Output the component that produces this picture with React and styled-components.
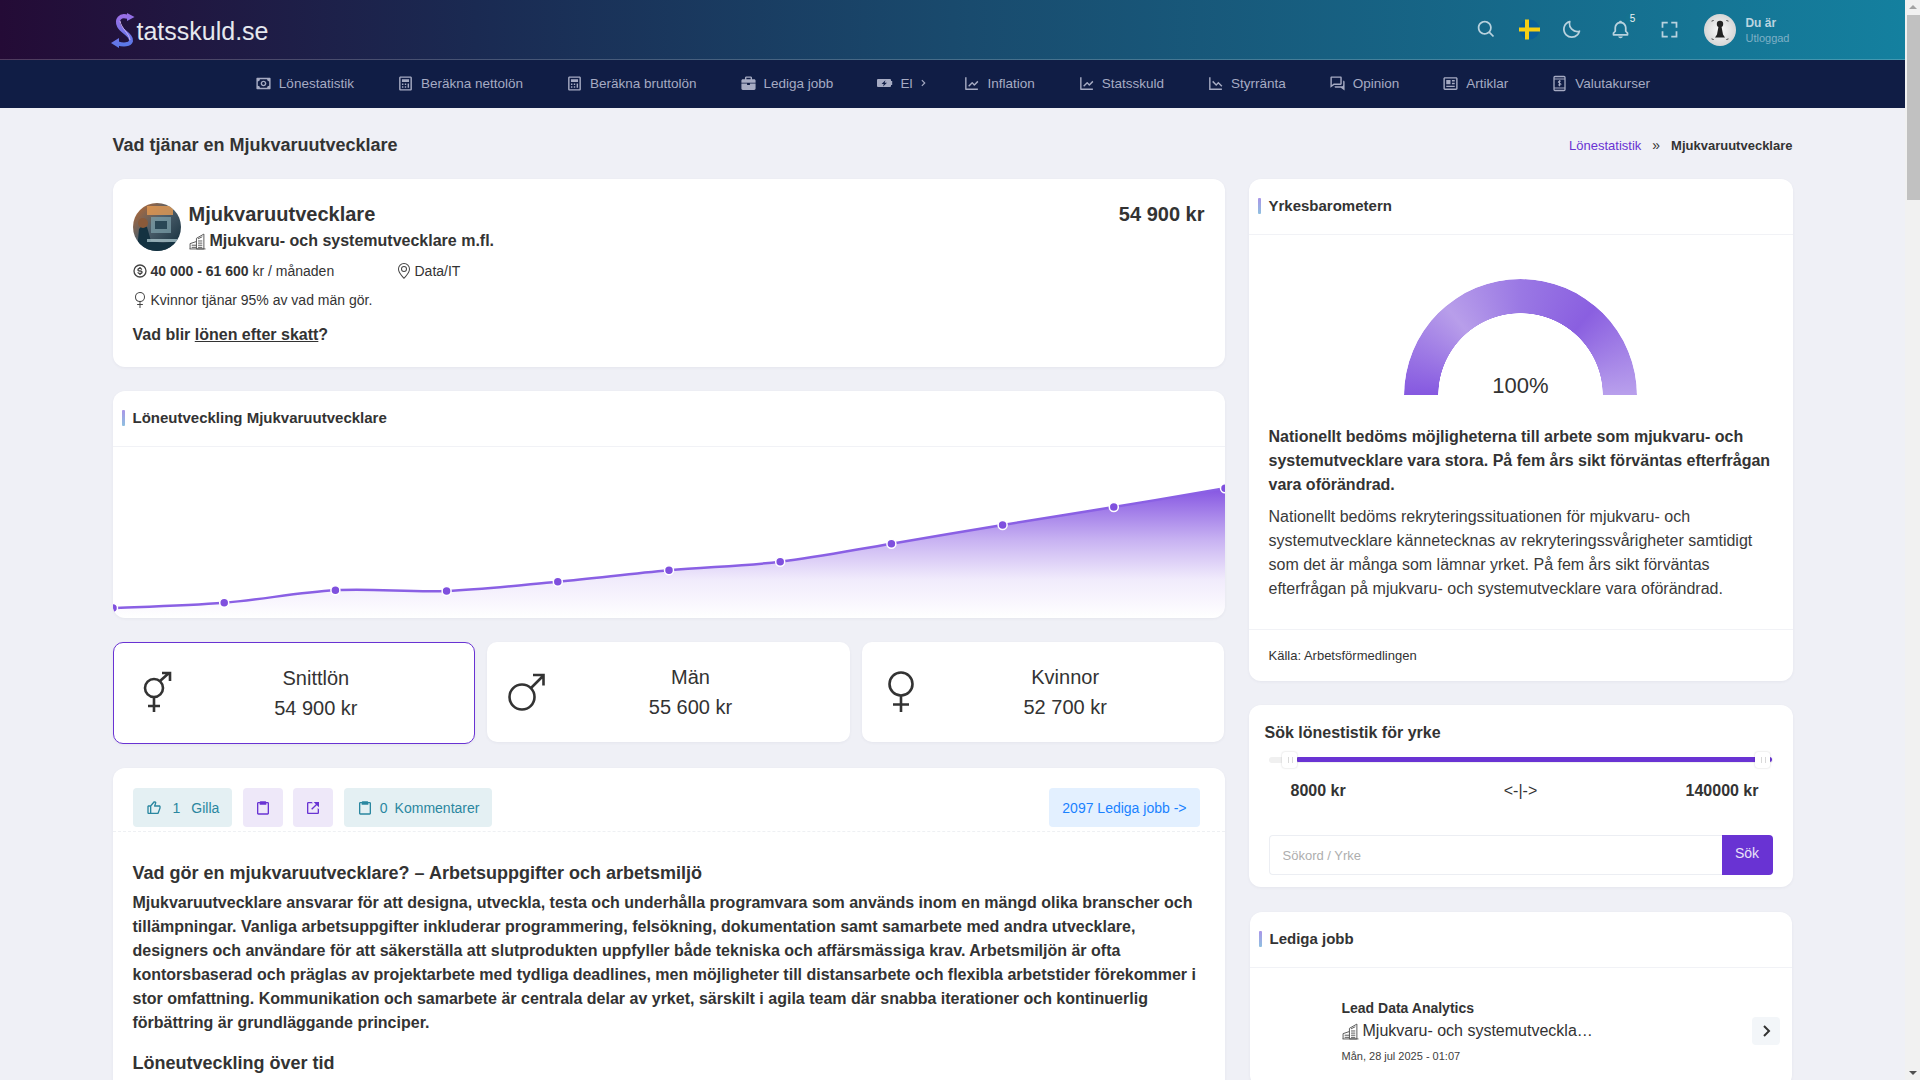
import React from "react";
import styled, { createGlobalStyle } from "styled-components";
import {
  BiSearch, BiMoon, BiBell, BiFullscreen, BiMoney, BiCalculator, BiSolidBriefcase, BiChevronRight,
  BiLineChart, BiLineChartDown, BiConversation, BiNews, BiLike, BiClipboard, BiLinkExternal, BiDollarCircle,
} from "react-icons/bi";
import { BsGenderFemale, BsGeoAlt } from "react-icons/bs";

const Global = createGlobalStyle`
  html, body { margin: 0; padding: 0; }
  body { background: #eff0f6; color: #333; font-family: "Liberation Sans", Arial, sans-serif; font-size: 14px; }
  * { box-sizing: border-box; }
  p, h1, h2, h3 { margin: 0; }
  a { color: inherit; }
`;

const Page = styled.div`padding-right: 15px;`;
const ScrollTrack = styled.div`position: fixed; top: 0; right: 0; bottom: 0; width: 15px; background: #f1f1f1;`;
const ScrollThumb = styled.div`position: absolute; top: 15px; left: 2px; right: 0; height: 185px; background: #c1c1c1;`;
const ScrollArrow = styled.div`
  position: absolute; left: 4px; width: 0; height: 0; border-left: 4px solid transparent; border-right: 4px solid transparent;
  ${p => (p.$down ? "bottom: 5px; border-top: 4px solid #505050;" : "top: 5px; border-bottom: 4px solid #a3a3a3;")}
`;
const TopBar = styled.header`
  height: 60px; display: flex; align-items: center; justify-content: center;
  background: linear-gradient(90deg, #240b36 0%, #1a2a52 25%, #194a6d 50%, #14809f 100%);
  border-bottom: 1px solid rgba(255, 255, 255, .2);
`;
const TopInner = styled.div`width: 1680px; display: flex; align-items: center; justify-content: space-between;`;
const Brand = styled.div`display: flex; align-items: center; color: #e6e8ee; font-size: 25px; line-height: 34px; margin-top: 2px;`;
const BrandMark = styled.svg`width: 26px; height: 36px; margin-left: -2px; margin-top: -2px; flex: none;`;
const TopTools = styled.div`display: flex; align-items: center; color: #b9d2de;`;
const ToolIcon = styled.div`
  width: ${p => p.$w || 49}px; display: flex; justify-content: center; position: relative; font-size: 21px; line-height: 0;
`;
const Badge = styled.span`
  position: absolute; top: -7px; left: 29px; width: 14px; height: 14px; border-radius: 50%;
  background: #15728f; color: #e8f2f6; font-size: 10px; line-height: 14px; text-align: center;
`;
const UserBox = styled.div`display: flex; align-items: center; gap: 9px; margin-left: 10px; margin-right: 3px;`;
const UserText = styled.div`display: flex; flex-direction: column; gap: 2px; margin-top: 2px; font-size: 11px; line-height: 13px;`;
const UserName = styled.span`font-size: 12px; line-height: 14px; font-weight: 700; color: #bcd5e0;`;
const UserState = styled.span`color: #7fb0c6;`;
const NavBar = styled.nav`
  height: 48px; padding-bottom: 2px; background: #101d45; display: flex; align-items: center; justify-content: center;
  color: #a6abc3; font-size: 13.5px;
`;
const NavItem = styled.div`display: flex; align-items: center; gap: 7px; padding: 0 21.5px; white-space: nowrap; svg { font-size: 17px; flex: none; }`;
const NavChevron = styled.span`margin-left: -3px; margin-right: -10px; line-height: 0; svg { font-size: 14px; }`;

const Container = styled.main`width: 1680px; margin: 0 auto;`;
const TitleRow = styled.div`display: flex; justify-content: space-between; align-items: center; padding: 27px 0 24px;`;
const PageTitle = styled.h1`font-size: 18px; line-height: 20px; font-weight: 700; color: #333;`;
const Crumbs = styled.div`display: flex; align-items: center; gap: 11px; font-size: 13px;`;
const CrumbLink = styled.span`color: #6933d3;`;
const CrumbSep = styled.span`color: #333; font-size: 14px;`;
const CrumbNow = styled.span`font-weight: 700;`;
const Columns = styled.div`display: grid; grid-template-columns: 1112px 544px; gap: 24px;`;
const Column = styled.div`display: flex; flex-direction: column; gap: 24px; min-width: 0;`;
const Card = styled.section`
  background: #fff; border-radius: 12px; box-shadow: 0 1px 3px rgba(60, 70, 110, .06); overflow: hidden;
`;

const ProfileCard = styled(Card)`padding: 23px 20px 23px; height: 188px;`;
const ProfileHead = styled.div`display: flex; align-items: center; justify-content: space-between;`;
const ProfileId = styled.div`display: flex; align-items: center; gap: 8px;`;
const ProfileNames = styled.div`display: flex; flex-direction: column;`;
const JobName = styled.h2`font-size: 20px; line-height: 24px; font-weight: 700;`;
const JobGroup = styled.div`display: flex; align-items: center; gap: 4px; font-size: 16px; line-height: 26px; font-weight: 700; margin-top: 2px; margin-bottom: -2px;`;
const Salary = styled.div`font-size: 20px; font-weight: 700; line-height: 24px; align-self: flex-start;`;
const MetaRow = styled.div`display: flex; align-items: center; font-size: 14px; line-height: 20px; margin-top: 9px;`;
const MetaCell = styled.div`display: flex; align-items: center; gap: 3px; margin-left: -1px; width: ${p => p.$w || "auto"}; svg { font-size: 16px; color: #444; flex: none; }`;
const Question = styled.p`font-size: 16px; line-height: 20px; font-weight: 700; margin-top: 15px;`;

const CardHead = styled.div`
  height: 56px; display: flex; align-items: center; gap: 8px; padding: 0 0 2px 9px; border-bottom: 1px solid #f1f2f6;
  font-size: 15px; font-weight: 700; color: #333;
  &::before { content: ""; width: 3px; height: 16px; border-radius: 1px; background: linear-gradient(180deg, #a996e8, #8fc0e0); }
`;
const ChartBox = styled.div`height: 171px; line-height: 0;`;
const ChartSvg = styled.svg`display: block; width: 100%; height: 100%;`;

const StatGrid = styled.div`display: grid; grid-template-columns: repeat(3, 1fr); gap: 12px; align-items: start;`;
const StatCard = styled.div`
  background: #fff; border-radius: 10px; display: grid; grid-template-columns: 80px 1fr; align-items: center;
  padding: 20px 36px 20px 0; box-shadow: 0 1px 3px rgba(60, 70, 110, .06);
  border: ${p => (p.$active ? "1px solid #6933d3" : "none")};
`;
const StatIcon = styled.svg`width: 44px; height: 44px; justify-self: center; fill: none; stroke: #333; stroke-width: 2.6; margin-left: ${p => p.$shift || 0}px;`;
const StatText = styled.div`text-align: center; font-size: 20px; line-height: 30px; color: #333;`;

const ActionBar = styled.div`display: flex; align-items: center; padding: 20px 25px 4px 20px; gap: 10.5px; border-bottom: 1px dashed #eef0f3; height: 64px;`;
const ActionBtn = styled.div`
  height: 39px; border-radius: 4px; display: flex; align-items: center; justify-content: center; font-size: 14px; white-space: nowrap;
  padding: 0 ${p => p.$px || 13}px; gap: ${p => p.$gap || 11}px;
  background: ${p => (p.$tone === "purple" ? "#eee8f9" : p.$tone === "blue" ? "#e3f0ff" : "#e4f0f3")};
  color: ${p => (p.$tone === "purple" ? "#6933d3" : p.$tone === "blue" ? "#1a82ff" : "#2a87a0")};
  svg { font-size: 16px; flex: none; }
`;
const Spacer = styled.div`flex: 1;`;
const Article = styled.div`padding: 30px 20px 30px;`;
const ArticleHead = styled.h3`font-size: 18px; line-height: 22px; font-weight: 700; color: #333;`;
const ArticleText = styled.p`font-size: 16px; line-height: 24px; font-weight: 700; color: #333; margin-top: 7px;`;
const ArticleHeadTwo = styled(ArticleHead)`margin-top: 17px;`;

const GaugeWrap = styled.div`display: flex; justify-content: center; padding-top: 44px; margin-bottom: 30px;`;
const Gauge = styled.div`
  width: 233px; height: 116px; position: relative;
  display: flex; align-items: flex-end; justify-content: center;
`;
const GaugeClip = styled.div`position: absolute; inset: 0; overflow: hidden;`;
const GaugeRing = styled.div`
  width: 233px; height: 233px; border-radius: 50%;
  background: conic-gradient(from 270deg, #8558e0 0deg, #b89eea 50deg, #9a78e4 90deg, #8a5fe0 130deg, #b9a0ec 180deg, #b9a0ec 360deg);
  -webkit-mask: radial-gradient(circle, transparent 82px, #000 82.5px);
  mask: radial-gradient(circle, transparent 82px, #000 82.5px);
`;
const GaugeValue = styled.span`position: relative; font-size: 22px; line-height: 28px; margin-bottom: -5px;`;
const BarometerBody = styled.div`padding: 0 20px;`;
const StrongPara = styled.p`font-size: 16px; line-height: 24px; font-weight: 700;`;
const PlainPara = styled.p`font-size: 16px; line-height: 24px; margin-top: 8px; color: #3a3a3a;`;
const SourceLine = styled.div`margin-top: 28px; height: 52px; border-top: 1px solid #f1f2f6; display: flex; align-items: center; padding: 0 20px; font-size: 13px;`;

const SearchCard = styled(Card)`padding: 18px 20px 12px;`;
const SearchTitle = styled.h3`font-size: 16px; line-height: 20px; font-weight: 700; margin-left: -4px;`;
const Slider = styled.div`position: relative; height: 6px; margin-top: 14px; background: #f0f0f0; border-radius: 3px;`;
const SliderFill = styled.div`position: absolute; left: 27px; right: 1px; top: 0; height: 5px; background: #6933d3; border-radius: 3px;`;
const SliderHandle = styled.div`
  position: absolute; top: -5px; width: 15px; height: 16px; background: #fff; border-radius: 3px;
  box-shadow: 0 0 2px rgba(0, 0, 0, .2); left: ${p => p.$left}px;
  &::after { content: ""; position: absolute; left: 6px; top: 5px; width: 3px; height: 6px; border-left: 1px solid #d9d9d9; border-right: 1px solid #d9d9d9; }
`;
const RangeRow = styled.div`display: grid; grid-template-columns: 1fr auto 1fr; padding: 0 14px; margin-top: 18px; font-size: 16px; line-height: 20px;`;
const RangeEnd = styled.span`font-weight: 700; text-align: ${p => p.$right ? "right" : "left"}; padding-left: ${p => p.$right ? 0 : 8}px;`;
const SearchForm = styled.div`display: flex; height: 40px; margin-top: 34px;`;
const SearchInput = styled.input`
  flex: 1; min-width: 0; border: 1px solid #eceef3; border-right: none; border-radius: 4px 0 0 4px; padding: 0 13px; outline: none;
  font: 13px "Liberation Sans", Arial, sans-serif; color: #333;
  &::placeholder { color: #aeaeae; opacity: 1; }
`;
const SearchBtn = styled.button`
  width: 51px; border: none; border-radius: 0 4px 4px 0; background: #6933d3; color: #e9e2f8; padding: 0 0 4px;
  font: 14px "Liberation Sans", Arial, sans-serif;
`;

const JobsCard = styled(Card)`margin: 1px 1px 0;`;
const JobItem = styled.div`display: flex; align-items: center; justify-content: space-between; padding: 32px 12px 24px 92px;`;
const JobText = styled.div`display: flex; flex-direction: column;`;
const JobTitle = styled.div`font-size: 14px; line-height: 16px; font-weight: 700;`;
const JobCompany = styled.div`display: flex; align-items: center; gap: 4px; font-size: 16px; line-height: 22px; margin-top: 4px;`;
const JobDate = styled.div`font-size: 11px; line-height: 13px; margin-top: 8px; color: #3e3e3e;`;
const JobArrow = styled.div`width: 28px; height: 28px; margin-top: -2px; border-radius: 4px; background: #f3f6f9; display: flex; align-items: center; justify-content: center; font-size: 24px; color: #333;`;

const Building = () => (
  <svg width="17" height="17" viewBox="0 0 16 16" fill="none" stroke="#555" strokeWidth=".9">
    <path d="M7 15V5l7-4v14zM1 15v-5l6-2M.5 15h15M8.5 5.500l4-2M8.500 7.500h4M8.500 9.500h4M8.500 11.500h4M8.500 13.500h4M2.500 11.500H7M2.500 13.500H7" />
  </svg>
);

const chartData = [161, 155.7, 143.3, 144, 134.7, 123.3, 114.7, 96.7, 78, 60, 41.3];
const stepX = 1112 / 10;
const pts = chartData.map((y, i) => [i * stepX, y]);
const linePath = pts.reduce((d, p, i) => {
  if (i === 0) return `M${p[0]} ${p[1]}`;
  const p0 = pts[Math.max(i - 2, 0)], p1 = pts[i - 1], p3 = pts[Math.min(i + 1, pts.length - 1)];
  const c1x = p1[0] + (p[0] - p0[0]) / 6, c1y = p1[1] + (p[1] - p0[1]) / 6;
  const c2x = p[0] - (p3[0] - p1[0]) / 6, c2y = p[1] - (p3[1] - p1[1]) / 6;
  return `${d} C${c1x} ${c1y} ${c2x} ${c2y} ${p[0]} ${p[1]}`;
}, "");

const navItems = [
  [<BiMoney />, "Lönestatistik"], [<BiCalculator />, "Beräkna nettolön"], [<BiCalculator />, "Beräkna bruttolön"],
  [<BiSolidBriefcase />, "Lediga jobb"],
  [<svg width="17" height="17" viewBox="0 0 17 17" fill="currentColor"><path d="M2 4h12a1 1 0 0 1 1 1v1h1.2v4H15v1a1 1 0 0 1-1 1H2a1 1 0 0 1-1-1V5a1 1 0 0 1 1-1zm7.4 1.2L5.6 9h2.2l-.8 2.6L11 7.8H8.7z" fillRule="evenodd" /></svg>, "El", true],
  [<BiLineChart />, "Inflation"], [<BiLineChart />, "Statsskuld"], [<BiLineChartDown />, "Styrränta"],
  [<BiConversation />, "Opinion"], [<BiNews />, "Artiklar"],
  [<svg width="17" height="17" viewBox="0 0 17 17" fill="none" stroke="currentColor" strokeWidth="1.3"><rect x="3" y="1.5" width="11" height="14" rx="1" /><path d="M3 4h11M3 13h11M10 6.4c-.5-.5-2.800-.7-2.800.7s2.900.7 2.900 2-2.500 1.300-3.100.5M8.500 5.300v6" strokeWidth="1" /></svg>, "Valutakurser"],
];

export default function App() {
  return (
    <Page>
      <Global />
      <ScrollTrack>
        <ScrollArrow />
        <ScrollThumb />
        <ScrollArrow $down />
      </ScrollTrack>
      <TopBar>
        <TopInner>
          <Brand>
            <BrandMark viewBox="0 0 26 36" fill="none">
              <defs>
                <linearGradient id="lg" x1="0" y1="0" x2="0" y2="1">
                  <stop offset="0" stopColor="#9a6fe6" />
                  <stop offset="1" stopColor="#5b78e8" />
                </linearGradient>
              </defs>
              <path d="M17 5 C9 2 5 8 8 14 C11 20 21 23 20 29 C19 33 12 33 7 31.500" stroke="url(#lg)" strokeWidth="4" />
              <path d="M9 9 C10 16 18 21 19 28" stroke="#cdb2f2" strokeWidth="1" />
              <path d="M16 1 L23.500 5 L16 9Z M8 26 L0 31 L8 36Z" fill="url(#lg)" />
            </BrandMark>
            tatsskuld.se
          </Brand>
          <TopTools>
            <ToolIcon $w={50}><BiSearch /></ToolIcon>
            <ToolIcon $w={36}>
              <svg width="21" height="21" viewBox="0 0 21 21">
                <circle cx="10.500" cy="10.500" r="10" fill="#0b5f98" />
                <path d="M0 8.500h21v4H0zM6 .5h4v20H6z" fill="#f7cf14" />
              </svg>
            </ToolIcon>
            <ToolIcon><BiMoon /></ToolIcon>
            <ToolIcon><BiBell /><Badge>5</Badge></ToolIcon>
            <ToolIcon><BiFullscreen /></ToolIcon>
            <UserBox>
              <svg width="32" height="32" viewBox="0 0 32 32">
                <defs>
                  <radialGradient id="av"><stop offset="0" stopColor="#fafafa" /><stop offset="1" stopColor="#d6d6d6" /></radialGradient>
                </defs>
                <circle cx="16" cy="16" r="16" fill="url(#av)" />
                <circle cx="16" cy="10" r="3.200" fill="#222" />
                <path d="M14.500 12.500h3l1.500 8 2 3H11l2-3z" fill="#222" />
                <path d="M8 8V6.500h2M24 8V6.500h-2M8 24v1.500h2M24 24v1.500h-2" stroke="#666" strokeWidth=".8" fill="none" />
              </svg>
              <UserText><UserName>Du är</UserName><UserState>Utloggad</UserState></UserText>
            </UserBox>
          </TopTools>
        </TopInner>
      </TopBar>
      <NavBar>
        {navItems.map(([icon, label, more]) => (
          <NavItem key={label}>
            {icon}{label}{more && <NavChevron><BiChevronRight /></NavChevron>}
          </NavItem>
        ))}
      </NavBar>

      <Container>
        <TitleRow>
          <PageTitle>Vad tjänar en Mjukvaruutvecklare</PageTitle>
          <Crumbs>
            <CrumbLink>Lönestatistik</CrumbLink>
            <CrumbSep>»</CrumbSep>
            <CrumbNow>Mjukvaruutvecklare</CrumbNow>
          </Crumbs>
        </TitleRow>
        <Columns>
          <Column>
            <ProfileCard>
              <ProfileHead>
                <ProfileId>
                  <svg width="48" height="48" viewBox="0 0 48 48">
                    <defs>
                      <clipPath id="pc"><circle cx="24" cy="24" r="24" /></clipPath>
                      <linearGradient id="pg" x1="0" y1="0" x2="1" y2="1">
                        <stop offset="0" stopColor="#c56a2c" />
                        <stop offset=".45" stopColor="#4d5f6c" />
                        <stop offset="1" stopColor="#0f2a38" />
                      </linearGradient>
                    </defs>
                    <g clipPath="url(#pc)">
                      <rect width="48" height="48" fill="url(#pg)" />
                      <rect x="18" y="14" width="20" height="16" fill="#7fa3ad" opacity=".7" />
                      <rect x="22" y="18" width="12" height="8" fill="#2a4756" />
                      <rect x="14" y="3" width="26" height="9" fill="#e39a52" opacity=".8" />
                      <path d="M4 48 L6 26 Q10 20 14 24 L18 38 L30 40 L48 38 V48Z" fill="#143241" />
                      <circle cx="10" cy="20" r="5" fill="#8a5a3a" />
                      <rect x="14" y="36" width="30" height="3" fill="#b9d4da" opacity=".7" />
                    </g>
                  </svg>
                  <ProfileNames>
                    <JobName>Mjukvaruutvecklare</JobName>
                    <JobGroup><Building />Mjukvaru- och systemutvecklare m.fl.</JobGroup>
                  </ProfileNames>
                </ProfileId>
                <Salary>54 900 kr</Salary>
              </ProfileHead>
              <MetaRow>
                <MetaCell $w="265px"><BiDollarCircle /><span><b>40 000 - 61 600</b> kr / månaden</span></MetaCell>
                <MetaCell><BsGeoAlt /><span>Data/IT</span></MetaCell>
              </MetaRow>
              <MetaRow>
                <MetaCell><BsGenderFemale /><span>Kvinnor tjänar 95% av vad män gör.</span></MetaCell>
              </MetaRow>
              <Question>Vad blir <u>lönen efter skatt</u>?</Question>
            </ProfileCard>

            <Card>
              <CardHead>Löneutveckling Mjukvaruutvecklare</CardHead>
              <ChartBox>
                <ChartSvg viewBox="0 0 1112 171" preserveAspectRatio="none">
                  <defs>
                    <linearGradient id="area" x1="0" y1="0" x2="0" y2="1">
                      <stop offset="0" stopColor="#8555e2" />
                      <stop offset=".4" stopColor="#8555e2" stopOpacity=".45" />
                      <stop offset=".7" stopColor="#8555e2" stopOpacity=".12" />
                      <stop offset="1" stopColor="#8555e2" stopOpacity="0" />
                    </linearGradient>
                  </defs>
                  <path d={`${linePath} L1112 171 L0 171Z`} fill="url(#area)" />
                  <path d={linePath} fill="none" stroke="#8a60e4" strokeWidth="2.500" />
                  {pts.map(([x, y]) => (
                    <circle key={x} cx={x} cy={y} r="4.500" fill="#7f50de" stroke="#fff" strokeWidth="1.500" />
                  ))}
                </ChartSvg>
              </ChartBox>
            </Card>

            <StatGrid>
              <StatCard $active>
                <StatIcon $shift={7} viewBox="0 0 44 44"><circle cx="19" cy="17" r="9" /><path d="M25 10l9-8M27 2h8v8M19 26v15M13 35h12" /></StatIcon>
                <StatText>Snittlön<br />54 900 kr</StatText>
              </StatCard>
              <StatCard>
                <StatIcon viewBox="0 0 44 44"><circle cx="17" cy="27" r="12.500" /><path d="M26 18L38 6M28 5h10.500v10.500" /></StatIcon>
                <StatText>Män<br />55 600 kr</StatText>
              </StatCard>
              <StatCard>
                <StatIcon viewBox="0 0 44 44"><circle cx="21" cy="14" r="11.500" /><path d="M21 26v16M13 34.500h16" /></StatIcon>
                <StatText>Kvinnor<br />52 700 kr</StatText>
              </StatCard>
            </StatGrid>

            <Card>
              <ActionBar>
                <ActionBtn><BiLike /><span>1</span><span>Gilla</span></ActionBtn>
                <ActionBtn $tone="purple" $px={12}><BiClipboard /></ActionBtn>
                <ActionBtn $tone="purple" $px={12}><BiLinkExternal /></ActionBtn>
                <ActionBtn $gap={7}><BiClipboard /><span>0</span><span>Kommentarer</span></ActionBtn>
                <Spacer />
                <ActionBtn $tone="blue" $px={13}>2097 Lediga jobb -&gt;</ActionBtn>
              </ActionBar>
              <Article>
                <ArticleHead>Vad gör en mjukvaruutvecklare? – Arbetsuppgifter och arbetsmiljö</ArticleHead>
                <ArticleText>
                  Mjukvaruutvecklare ansvarar för att designa, utveckla, testa och underhålla programvara som används inom en mängd olika branscher och tillämpningar. Vanliga arbetsuppgifter inkluderar programmering, felsökning, dokumentation samt samarbete med andra utvecklare, designers och användare för att säkerställa att slutprodukten uppfyller både tekniska och affärsmässiga krav. Arbetsmiljön är ofta kontorsbaserad och präglas av projektarbete med tydliga deadlines, men möjligheter till distansarbete och flexibla arbetstider förekommer i stor omfattning. Kommunikation och samarbete är centrala delar av yrket, särskilt i agila team där snabba iterationer och kontinuerlig förbättring är grundläggande principer.
                </ArticleText>
                <ArticleHeadTwo>Löneutveckling över tid</ArticleHeadTwo>
              </Article>
            </Card>
          </Column>

          <Column>
            <Card>
              <CardHead>Yrkesbarometern</CardHead>
              <GaugeWrap>
                <Gauge>
                  <GaugeClip><GaugeRing /></GaugeClip>
                  <GaugeValue>100%</GaugeValue>
                </Gauge>
              </GaugeWrap>
              <BarometerBody>
                <StrongPara>Nationellt bedöms möjligheterna till arbete som mjukvaru- och systemutvecklare vara stora. På fem års sikt förväntas efterfrågan vara oförändrad.</StrongPara>
                <PlainPara>Nationellt bedöms rekryteringssituationen för mjukvaru- och systemutvecklare kännetecknas av rekryteringssvårigheter samtidigt som det är många som lämnar yrket. På fem års sikt förväntas efterfrågan på mjukvaru- och systemutvecklare vara oförändrad.</PlainPara>
              </BarometerBody>
              <SourceLine>Källa: Arbetsförmedlingen</SourceLine>
            </Card>

            <SearchCard>
              <SearchTitle>Sök lönestistik för yrke</SearchTitle>
              <Slider>
                <SliderFill />
                <SliderHandle $left={13} />
                <SliderHandle $left={486} />
              </Slider>
              <RangeRow>
                <RangeEnd>8000 kr</RangeEnd>
                <span>&lt;-|-&gt;</span>
                <RangeEnd $right>140000 kr</RangeEnd>
              </RangeRow>
              <SearchForm>
                <SearchInput placeholder="Sökord / Yrke" />
                <SearchBtn>Sök</SearchBtn>
              </SearchForm>
            </SearchCard>

            <JobsCard>
              <CardHead>Lediga jobb</CardHead>
              <JobItem>
                <JobText>
                  <JobTitle>Lead Data Analytics</JobTitle>
                  <JobCompany><Building />Mjukvaru- och systemutveckla…</JobCompany>
                  <JobDate>Mån, 28 jul 2025 - 01:07</JobDate>
                </JobText>
                <JobArrow><BiChevronRight /></JobArrow>
              </JobItem>
            </JobsCard>
          </Column>
        </Columns>
      </Container>
    </Page>
  );
}
